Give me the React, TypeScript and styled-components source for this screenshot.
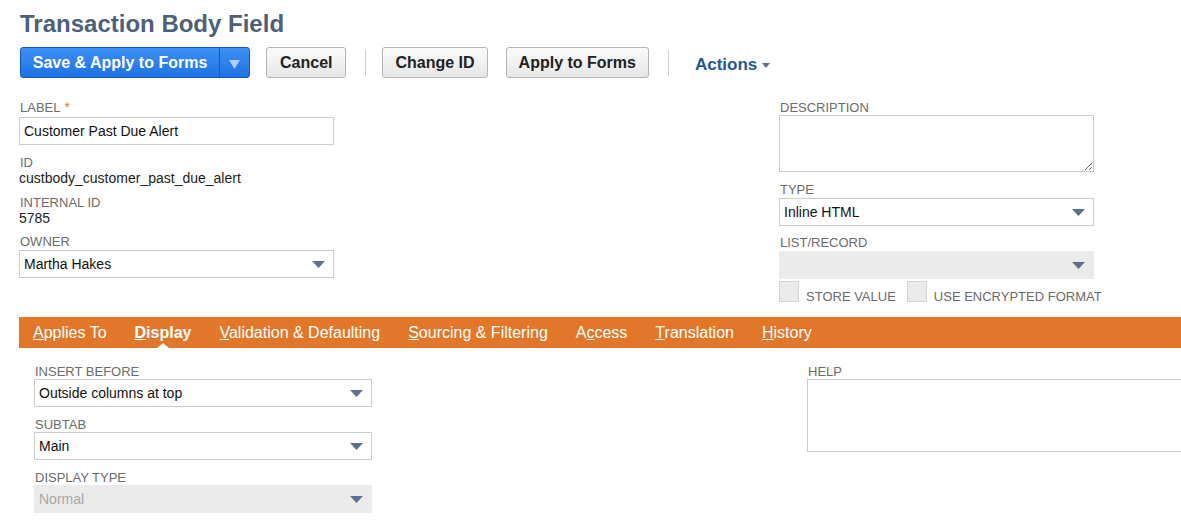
import React from 'react'
import styled, { createGlobalStyle } from 'styled-components'

const GlobalStyle = createGlobalStyle`
  html, body {
    margin: 0;
    padding: 0;
    background: #fff;
    font-family: "Liberation Sans", Arial, sans-serif;
    overflow: hidden;
  }
`;

const Page = styled.div`
  padding: 9px 0 0 19px;
  width: 1162px;
  overflow: hidden;
`;

const Title = styled.h1`
  margin: 0 0 8px 1px;
  font-size: 24px;
  line-height: 30px;
  font-weight: bold;
  color: #4d5f79;
`;

const Toolbar = styled.div`
  display: flex;
  align-items: center;
  height: 31px;
  padding-left: 1px;
`;

const SplitButton = styled.div`
  display: flex;
  height: 31px;
  box-sizing: border-box;
  border: 1px solid #1659c4;
  border-radius: 3px;
  background: linear-gradient(#3d90f6, #1f72e6);
  margin-right: 16px;
`;

const PrimaryPart = styled.button`
  all: unset;
  width: 198px;
  text-align: center;
  color: #fff;
  font: bold 16px "Liberation Sans", Arial, sans-serif;
  line-height: 29px;
`;

const DropPart = styled.span`
  width: 29px;
  border-left: 1px solid #1659c4;
  display: flex;
  align-items: center;
  justify-content: center;
  svg { margin-top: 3px; }
`;

const GrayButton = styled.button<{ $pad?: number; $after?: number }>`
  height: 31px;
  box-sizing: border-box;
  padding: 0 ${p => p.$pad ?? 13}px;
  border: 1px solid #b5b5b5;
  border-radius: 3px;
  background: linear-gradient(#fbfbfb, #e6e6e6);
  color: #222;
  font: bold 16px "Liberation Sans", Arial, sans-serif;
  margin-right: ${p => p.$after ?? 18}px;
`;

const Divider = styled.span`
  width: 1px;
  height: 26px;
  background: #cfcfcf;
  margin-right: 16px;
`;

const Actions = styled.span`
  display: flex;
  align-items: center;
  gap: 5px;
  margin: 5px 0 0 10px;
  color: #24579a;
  font-weight: bold;
  font-size: 17px;
`;

const FormGrid = styled.div`
  display: grid;
  grid-template-columns: 315px 315px;
  column-gap: 445px;
  margin-top: 22px;
`;

const Column = styled.div`
  display: flex;
  flex-direction: column;
`;

const Field = styled.div<{ $top?: number }>`
  display: flex;
  flex-direction: column;
  margin-top: ${p => p.$top ?? 0}px;
`;

const Label = styled.span<{ $gap?: number }>`
  font-size: 13px;
  line-height: 15px;
  color: #6b6b6b;
  text-transform: uppercase;
  padding-left: 1px;
  margin-bottom: ${p => p.$gap ?? 1}px;
`;

const Star = styled.span`
  color: #e07a2c;
  margin-left: 4px;
  font-size: 14px;
`;

const Value = styled.span`
  font-size: 14px;
  line-height: 16px;
  color: #222;
`;

const TextInput = styled.div`
  height: 28px;
  box-sizing: border-box;
  border: 1px solid #cccccc;
  padding: 0 4px;
  font-size: 14px;
  line-height: 26px;
  color: #111;
`;

const SelectBox = styled.div<{ $disabled?: boolean }>`
  height: 28px;
  box-sizing: border-box;
  border: 1px solid ${p => (p.$disabled ? '#ebebeb' : '#cccccc')};
  background: ${p => (p.$disabled ? '#ebebeb' : '#fff')};
  display: flex;
  align-items: center;
  justify-content: space-between;
  padding: 0 8px 0 4px;
  font-size: 14px;
  color: ${p => (p.$disabled ? '#a8a8a8' : '#111')};
`;

const TextArea = styled.textarea<{ $h: number; $w?: string }>`
  display: block;
  height: ${p => p.$h}px;
  width: ${p => p.$w ?? '100%'};
  box-sizing: border-box;
  border: 1px solid #cccccc;
  border-radius: 0;
  resize: ${p => (p.$w ? 'none' : 'both')};
  font: 14px "Liberation Sans", Arial, sans-serif;
  outline: none;
`;

const CheckRow = styled.div`
  display: flex;
  align-items: flex-end;
  margin-top: 2px;
  white-space: nowrap;
`;

const CheckBox = styled.span`
  flex: none;
  width: 18px;
  height: 19px;
  background: #ebebeb;
  border: 1px solid #d4d4d4;
  margin-right: 7px;
`;

const CheckText = styled.span`
  font-size: 13px;
  line-height: 13px;
  color: #6b6b6b;
  margin-right: 11px;
  margin-bottom: -1px;
`;

const TabBar = styled.div`
  margin-top: 15px;
  height: 31px;
  background: #e37729;
  display: flex;
  align-items: center;
  gap: 28px;
  padding-left: 14px;
`;

const Tab = styled.span<{ $active?: boolean }>`
  position: relative;
  color: #fff;
  font-size: 16px;
  font-weight: ${p => (p.$active ? 'bold' : 'normal')};
  line-height: 31px;
  white-space: nowrap;
  ${p =>
    p.$active &&
    `&::after {
      content: '';
      position: absolute;
      left: 50%;
      bottom: 0;
      margin-left: -6px;
      border-left: 6px solid transparent;
      border-right: 6px solid transparent;
      border-bottom: 5px solid #fff;
    }`}
`;

const TabContent = styled.div`
  display: grid;
  grid-template-columns: 338px 1fr;
  column-gap: 435px;
  padding: 16px 0 0 15px;
`;

const Arrow = () => (
  <svg width="13" height="7" viewBox="0 0 13 7">
    <path d="M0 0 H13 L6.5 7 Z" fill="#5b7092" />
  </svg>
);

const Select = ({ value, disabled }: { value: string; disabled?: boolean }) => (
  <SelectBox $disabled={disabled}>
    <span>{value}</span>
    <Arrow />
  </SelectBox>
);

const tabs: { key: React.ReactNode; active?: boolean }[] = [
  { key: <><u>A</u>pplies To</> },
  { key: <><u>D</u>isplay</>, active: true },
  { key: <><u>V</u>alidation &amp; Defaulting</> },
  { key: <><u>S</u>ourcing &amp; Filtering</> },
  { key: <>A<u>c</u>cess</> },
  { key: <><u>T</u>ranslation</> },
  { key: <><u>H</u>istory</> },
];

export default function App() {
  return (
    <Page>
      <GlobalStyle />
      <Title>Transaction Body Field</Title>
      <Toolbar>
        <SplitButton>
          <PrimaryPart>Save &amp; Apply to Forms</PrimaryPart>
          <DropPart>
            <svg width="11" height="9" viewBox="0 0 11 9">
              <path d="M0 0 H11 L5.5 9 Z" fill="#b3cdf2" />
            </svg>
          </DropPart>
        </SplitButton>
        <GrayButton $after={19}>Cancel</GrayButton>
        <Divider />
        <GrayButton $pad={12}>Change ID</GrayButton>
        <GrayButton $pad={12} $after={19}>Apply to Forms</GrayButton>
        <Divider />
        <Actions>
          Actions
          <svg width="8" height="5" viewBox="0 0 8 5">
            <path d="M0 0 H8 L4 5 Z" fill="#5b7092" />
          </svg>
        </Actions>
      </Toolbar>

      <FormGrid>
        <Column>
          <Field>
            <Label $gap={2}>Label<Star>*</Star></Label>
            <TextInput>Customer Past Due Alert</TextInput>
          </Field>
          <Field $top={10}>
            <Label $gap={0}>ID</Label>
            <Value>custbody_customer_past_due_alert</Value>
          </Field>
          <Field $top={9}>
            <Label $gap={0}>Internal ID</Label>
            <Value>5785</Value>
          </Field>
          <Field $top={8}>
            <Label>Owner</Label>
            <Select value="Martha Hakes" />
          </Field>
        </Column>
        <Column>
          <Field>
            <Label $gap={0}>Description</Label>
            <TextArea $h={57} />
          </Field>
          <Field $top={10}>
            <Label>Type</Label>
            <Select value="Inline HTML" />
          </Field>
          <Field $top={9}>
            <Label>List/Record</Label>
            <Select value="" disabled />
          </Field>
          <CheckRow>
            <CheckBox />
            <CheckText>STORE VALUE</CheckText>
            <CheckBox />
            <CheckText>USE ENCRYPTED FORMAT</CheckText>
          </CheckRow>
        </Column>
      </FormGrid>

      <TabBar>
        {tabs.map((t, i) => (
          <Tab key={i} $active={t.active}>{t.key}</Tab>
        ))}
      </TabBar>

      <TabContent>
        <Column>
          <Field>
            <Label $gap={0}>Insert Before</Label>
            <Select value="Outside columns at top" />
          </Field>
          <Field $top={10}>
            <Label $gap={0}>Subtab</Label>
            <Select value="Main" />
          </Field>
          <Field $top={10}>
            <Label $gap={0}>Display Type</Label>
            <Select value="Normal" disabled />
          </Field>
        </Column>
        <Column>
          <Field>
            <Label $gap={0}>Help</Label>
            <TextArea $h={73} $w="420px" />
          </Field>
        </Column>
      </TabContent>
    </Page>
  )
}
